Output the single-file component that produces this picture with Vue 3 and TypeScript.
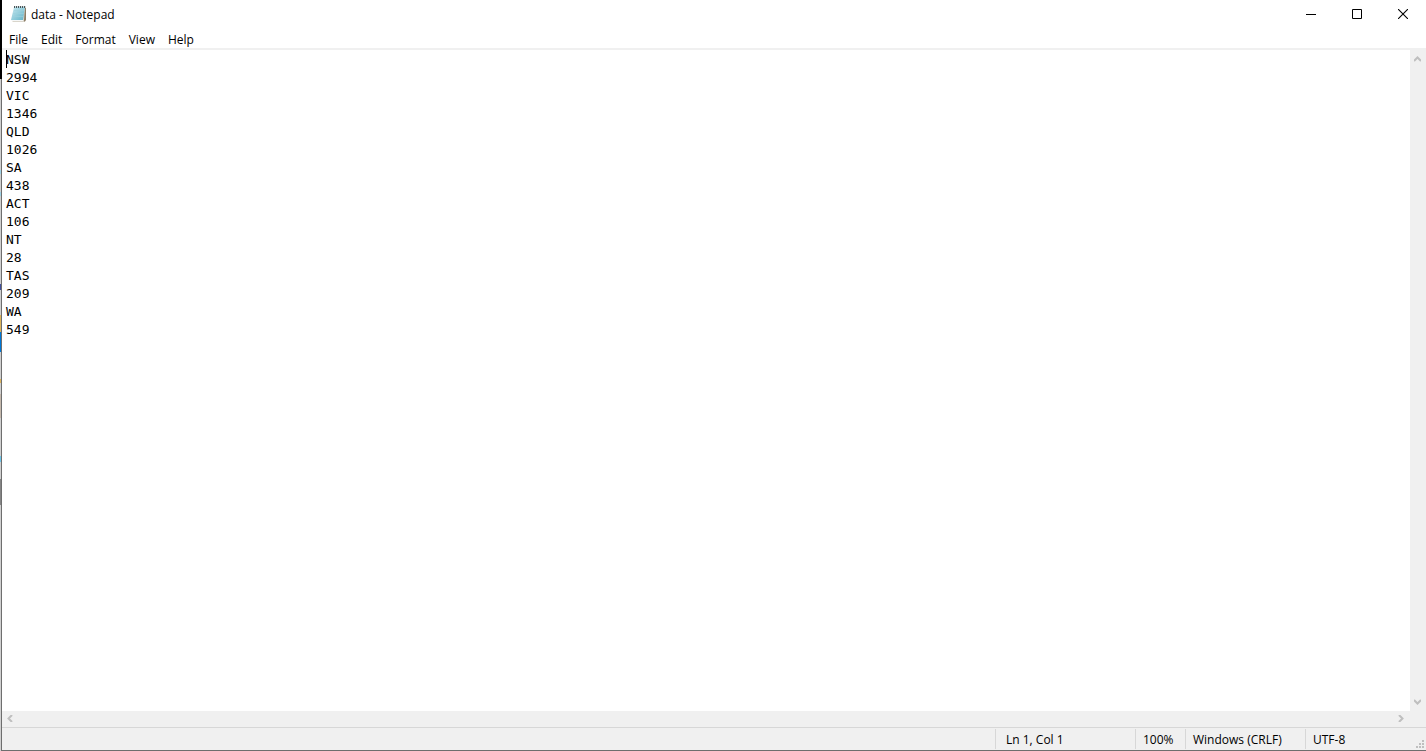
<script setup lang="ts">
import { ref } from 'vue'

const menus: string[] = ['File', 'Edit', 'Format', 'View', 'Help']
const content = ref<string>(
  ['NSW', '2994', 'VIC', '1346', 'QLD', '1026', 'SA', '438', 'ACT', '106', 'NT', '28', 'TAS', '209', 'WA', '549'].join('\n'),
)
const dots: number[][] = [[6, 0], [3, 3], [6, 3], [0, 6], [3, 6], [6, 6]]
</script>

<template>
  <div class="desktop">
    <div class="backdrop" aria-hidden="true"></div>
    <main class="window">
      <header class="titlebar">
        <svg class="app-icon" width="16" height="18" viewBox="0 0 16 18" aria-hidden="true">
          <defs>
            <linearGradient id="pad" x1="0" y1="0" x2="1" y2="1">
              <stop offset="0" stop-color="#c9e9f0" />
              <stop offset="1" stop-color="#62b4c9" />
            </linearGradient>
          </defs>
          <path d="M4 2H15V16L13 17H2L1 16Z" fill="#d9d5cb" />
          <path d="M14 3H15V15L13 17V15Z" fill="#8d7f68" />
          <path d="M3 2H14L12 15H0Z" fill="url(#pad)" />
          <path d="M0 15H12V16H1Z" fill="#f5f7f7" />
          <path d="M3 5.5H13M2 8.5H13M2 11.5H12" stroke="#9cd0dc" fill="none" opacity=".6" />
          <path d="M3 1.5H15" stroke="#d5dcdd" fill="none" />
          <path d="M3.5 1V3M5.5 1V3M7.5 1V3M9.5 1V3M11.5 1V3M13.5 1V3" stroke="#4b5558" fill="none" />
        </svg>
        <h1 class="title">data - Notepad</h1>
        <div class="controls">
          <button type="button" aria-label="Minimize">
            <svg width="10" height="10" viewBox="0 0 10 10"><path d="M0 5.5H10" stroke="#000" /></svg>
          </button>
          <button type="button" aria-label="Maximize">
            <svg width="10" height="10" viewBox="0 0 10 10"><path d="M.5 .5H9.5V9.5H.5Z" stroke="#000" fill="none" /></svg>
          </button>
          <button type="button" aria-label="Close">
            <svg width="10" height="10" viewBox="0 0 10 10"><path d="M0 0L10 10M10 0L0 10" stroke="#000" stroke-width="1.1" /></svg>
          </button>
        </div>
      </header>
      <nav class="menubar" aria-label="Menu">
        <button v-for="m in menus" :key="m" type="button">{{ m }}</button>
      </nav>
      <section class="editor">
        <div class="page">
          <textarea v-model="content" aria-label="Text editor" wrap="off" spellcheck="false"></textarea>
          <span class="caret"></span>
        </div>
        <div class="vscroll">
          <button type="button" aria-label="Scroll up">
            <svg width="7" height="6" viewBox="0 0 7 6"><path d="M0 5L3.5 1.5L7 5" /></svg>
          </button>
          <button type="button" aria-label="Scroll down">
            <svg width="7" height="6" viewBox="0 0 7 6"><path d="M0 1L3.5 4.5L7 1" /></svg>
          </button>
        </div>
        <div class="hscroll">
          <button type="button" aria-label="Scroll left">
            <svg width="6" height="7" viewBox="0 0 6 7"><path d="M5 0L1.5 3.5L5 7" /></svg>
          </button>
          <button type="button" aria-label="Scroll right">
            <svg width="6" height="7" viewBox="0 0 6 7"><path d="M1 0L4.5 3.5L1 7" /></svg>
          </button>
        </div>
      </section>
      <footer class="statusbar">
        <span class="cell position">Ln 1, Col 1</span>
        <span class="cell zoom">100%</span>
        <span class="cell ending">Windows (CRLF)</span>
        <span class="cell encoding">UTF-8</span>
        <svg class="grip" width="8" height="8" viewBox="0 0 8 8" aria-hidden="true">
          <rect v-for="d in dots" :key="d.join()" :x="d[0]" :y="d[1]" width="2" height="2" fill="#bfbfbf" />
        </svg>
      </footer>
    </main>
  </div>
</template>

<style>
body {
  margin: 0;
  overflow: hidden;
}
</style>

<style scoped>
.desktop {
  display: flex;
  height: 100vh;
  font-family: "Open Sans", "Noto Sans", sans-serif;
  font-size: 12px;
  line-height: 16px;
  color: #000;
  background: linear-gradient(#000 79px, #6e6e6e 79px);
}
.backdrop {
  width: 1px;
  background: linear-gradient(
    #000 79px, #d0d0d0 79px 170px, #9ed3e6 170px 174px, #d0d0d0 174px 192px, #9ed3e6 192px 196px,
    #d0d0d0 196px 284px, #3f4f9c 284px 290px, #d0d0d0 290px 315px, #dcb45c 315px 332px,
    #0078d7 332px 352px, #d0d0d0 352px 379px, #dcb45c 379px 383px, #d0d0d0 383px 394px,
    #c5b9ad 394px 418px, #d0d0d0 418px 456px, #6fc5e8 456px 462px, #d0d0d0 462px 479px,
    #858585 479px 505px, #d0d0d0 505px
  );
}
.window {
  flex: 1;
  min-width: 0;
  display: flex;
  flex-direction: column;
  margin-left: 1px;
  border-bottom: 1px solid #6e6e6e;
  background: #fff;
}
button {
  border: 0;
  padding: 0;
  background: transparent;
  color: inherit;
  font: inherit;
}
.titlebar {
  display: flex;
  align-items: center;
  height: 30px;
  padding-left: 9px;
}
.app-icon {
  margin-bottom: 2px;
}
.title {
  flex: 1;
  margin: 0 0 0 4px;
  font-size: 12px;
  font-weight: 400;
}
.controls {
  display: flex;
  height: 30px;
}
.controls button {
  display: flex;
  align-items: center;
  justify-content: center;
  width: 46px;
  padding-bottom: 2px;
}
.menubar {
  display: flex;
  gap: 13px;
  height: 18px;
  padding-left: 7px;
  border-bottom: 2px solid #f0f0f0;
}
.menubar button {
  line-height: 20px;
}
.editor {
  flex: 1;
  min-height: 0;
  display: grid;
  grid-template-columns: 1fr 16px;
  grid-template-rows: 1fr 16px;
  background: #f0f0f0;
}
.page {
  position: relative;
  background: #fff;
}
textarea {
  display: block;
  box-sizing: border-box;
  width: 100%;
  height: 100%;
  padding: 1px 4px 0;
  border: 0;
  outline: 0;
  resize: none;
  overflow: hidden;
  background: transparent;
  color: #000;
  font: 13px/18px "DejaVu Sans Mono", monospace;
}
.caret {
  position: absolute;
  top: 0;
  left: 4px;
  width: 1px;
  height: 18px;
  background: #000;
}
.vscroll,
.hscroll {
  display: flex;
  justify-content: space-between;
}
.vscroll {
  flex-direction: column;
  padding: 1px 0;
}
.hscroll {
  padding-right: 1px;
}
.vscroll button,
.hscroll button {
  display: flex;
  align-items: center;
  justify-content: center;
  width: 15px;
  height: 16px;
}
.hscroll button {
  width: 16px;
  height: 15px;
}
.vscroll path,
.hscroll path {
  fill: none;
  stroke: #bfbfbf;
  stroke-width: 2;
}
.statusbar {
  position: relative;
  display: flex;
  justify-content: flex-end;
  height: 22px;
  border-top: 1px solid #d7d7d7;
  background: #f0f0f0;
}
.cell {
  box-sizing: border-box;
  margin: 1px 0;
  padding-left: 7px;
  border-left: 1px solid #d7d7d7;
  line-height: 22px;
}
.position {
  width: 140px;
  padding-left: 10px;
}
.zoom {
  width: 50px;
}
.ending {
  width: 120px;
}
.encoding {
  width: 121px;
}
.grip {
  position: absolute;
  right: 2px;
  bottom: 2px;
}
</style>
